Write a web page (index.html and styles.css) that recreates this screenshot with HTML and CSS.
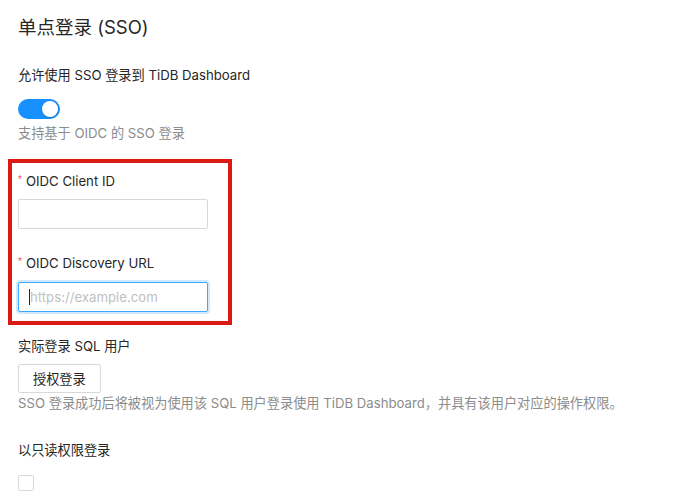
FILE: index.html
```html
<!DOCTYPE html>
<html lang="zh-CN">
<head>
<meta charset="utf-8">
<title>单点登录 (SSO)</title>
<link rel="stylesheet" href="styles.css">
</head>
<body>
<div class="page">
  <h2 class="title">单点登录 (SSO)</h2>
  <div class="label">允许使用 SSO 登录到 TiDB Dashboard</div>
  <div class="switch"><span class="knob"></span></div>
  <div class="help">支持基于 OIDC 的 SSO 登录</div>

  <div class="highlight">
    <div class="label"><span class="req">*</span>OIDC Client ID</div>
    <input class="input input-first" type="text">
    <div class="label label-second"><span class="req">*</span>OIDC Discovery URL</div>
    <div class="input-wrap">
      <input class="input input-focus" type="text" placeholder="https://example.com">
    </div>
  </div>

  <div class="label label-sql">实际登录 SQL 用户</div>
  <button class="btn" type="button">授权登录</button>
  <div class="help">SSO 登录成功后将被视为使用该 SQL 用户登录使用 TiDB Dashboard，并具有该用户对应的操作权限。</div>

  <div class="label label-ro">以只读权限登录</div>
  <span class="checkbox"></span>
</div>
</body>
</html>
```

FILE: styles.css
```css
* { box-sizing: border-box; }

body {
  margin: 0;
  background: #ffffff;
  font-family: Inter, "Noto Sans CJK SC", sans-serif;
  font-size: 13.2px;
  color: #262626;
}

.page {
  display: flex;
  flex-direction: column;
  align-items: flex-start;
  padding: 0 18px;
}

.title {
  margin: 13px 0 0;
  font-size: 18.5px;
  line-height: 28px;
  font-weight: 400;
  color: #262626;
}

.label {
  margin-top: 24px;
  height: 20px;
  line-height: 20px;
  color: #262626;
}

.req {
  color: #ff4d4f;
  font-family: "Liberation Sans", sans-serif;
  font-size: 10px;
  line-height: 0;
  vertical-align: 3px;
  margin-right: 4px;
}

.switch {
  margin-top: 14px;
  width: 42px;
  height: 20px;
  border-radius: 10px;
  background: #1890ff;
  display: flex;
  justify-content: flex-end;
  align-items: center;
  padding: 2px;
}

.knob {
  width: 16px;
  height: 16px;
  border-radius: 50%;
  background: #ffffff;
  box-shadow: 0 1px 2px rgba(0, 35, 11, 0.2);
}

.help {
  margin-top: 0;
  line-height: 20px;
  color: #8c8c8c;
}

.switch + .help { margin-top: 4px; }

.highlight {
  margin: 16px 0 0 -10px;
  border: 4px solid #dc1a14;
  padding: 8px 20px 9px 6px;
  display: flex;
  flex-direction: column;
  align-items: flex-start;
}

.highlight .label:first-child { margin-top: 0; }

.input {
  display: block;
  width: 190px;
  height: 30px;
  border: 1px solid #d9d9d9;
  border-radius: 2px;
  padding: 0 11px;
  font-family: Inter, "Noto Sans CJK SC", sans-serif;
  font-size: 13.2px;
  color: #262626;
  background: #fff;
  outline: none;
}

.input-first { margin-top: 8px; }

.label-second { margin-top: 24px; }

.input-wrap {
  position: relative;
  margin-top: 9px;
}

.input-wrap::before {
  content: "";
  position: absolute;
  left: 11px;
  top: 7px;
  width: 1px;
  height: 16px;
  background: #262626;
}

.input-focus {
  border-color: #40a9ff;
  box-shadow: 0 0 0 2px rgba(24, 144, 255, 0.2);
}

.input::placeholder { color: #bfbfbf; }

.label-sql { margin-top: 11px; }

.btn {
  margin-top: 8px;
  height: 29px;
  padding: 0 14px;
  border: 1px solid #d9d9d9;
  border-radius: 2px;
  background: #fff;
  font-family: Inter, "Noto Sans CJK SC", sans-serif;
  font-size: 13.2px;
  color: #262626;
}

.label-ro { margin-top: 27px; }

.checkbox {
  margin-top: 15px;
  width: 16px;
  height: 16px;
  border: 1px solid #d9d9d9;
  border-radius: 2px;
  background: #fff;
}
```
